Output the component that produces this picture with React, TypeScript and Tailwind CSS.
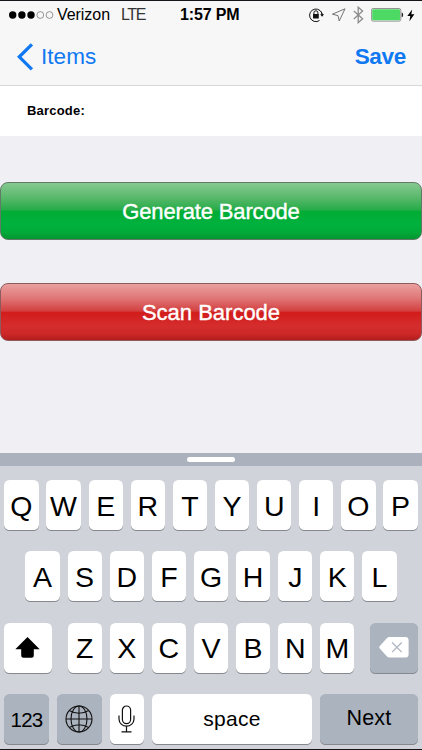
import type { ReactNode } from 'react';

const rowOne = ['Q', 'W', 'E', 'R', 'T', 'Y', 'U', 'I', 'O', 'P'];
const rowTwo = ['A', 'S', 'D', 'F', 'G', 'H', 'J', 'K', 'L'];
const rowThree = ['Z', 'X', 'C', 'V', 'B', 'N', 'M'];

type KeyProps = {
    children: ReactNode;
    className?: string;
    dark?: boolean;
}

function Key({ children, className = 'w-[34.2px] text-[28.5px] pt-px', dark }: KeyProps) {
    return (
        <button className={`h-[50px] shrink-0 rounded-[5.5px] flex items-center justify-center shadow-[0_1px_0.5px_#85888d] ${dark ? 'bg-[#abb3bf]' : 'bg-white'} ${className}`}>
            {children}
        </button>
    );
}

function StatusBar() {
    return (
        <div className="h-7 flex items-center relative">
            <svg className="ml-[9px]" width="45" height="8" viewBox="0 0 45 8">
                <circle cx="3.7" cy="4" r="3.7" />
                <circle cx="12.9" cy="4" r="3.7" />
                <circle cx="22" cy="4" r="3.7" />
                <circle cx="31.3" cy="4" r="3.4" fill="none" stroke="#555" strokeWidth="0.6" />
                <circle cx="40.5" cy="4" r="3.4" fill="none" stroke="#555" strokeWidth="0.6" />
            </svg>
            <span className="ml-[3px] text-[16px] tracking-[-0.05px]">Verizon</span>
            <span className="ml-[11px] text-[16px] tracking-[-1.4px] text-[#333]">LTE</span>
            <span className="absolute left-[180px] text-[16px] font-bold tracking-[-0.15px] whitespace-nowrap">1:57 PM</span>

            <div className="absolute left-[308px] flex items-center">
                {/* Rotation lock */}
                <svg width="16" height="16" viewBox="0 0 16 16" fill="none" stroke="#111">
                    <path d="M14.2 8.6A6.3 6.3 0 1 0 11.5 13.5M14.2 8.2A6.3 6.3 0 0 0 13 4.6" strokeWidth="1" />
                    <path d="M12.2 7.3h3.8l-1.9 2.5z" fill="#111" stroke="none" />
                    <path d="M5.9 7.5V5.8a2 2 0 0 1 4 0v1.7" strokeWidth="1" />
                    <rect x="5" y="7" width="5.8" height="4.4" rx="0.5" fill="#111" stroke="none" />
                </svg>
                {/* Location */}
                <svg className="ml-[7px]" width="15" height="14" viewBox="0 0 15 14" fill="none" stroke="#666" strokeWidth="0.9">
                    <path d="M14 0.8L1.4 6.2L7 7.6L8.2 13Z" />
                </svg>
                {/* Bluetooth */}
                <svg className="ml-[7px]" width="11" height="18" viewBox="0 0 11 18" fill="none" stroke="#8c8c8c" strokeWidth="1.3">
                    <path d="M0.8 4.9L9.6 12.7L5.2 16.7V1.2L9.6 5.1L0.8 13" />
                </svg>
                {/* Battery */}
                <svg className="ml-[7px]" width="33" height="14" viewBox="0 0 33 14">
                    <rect x="0.4" y="0.5" width="29.4" height="12.6" rx="1.8" fill="#fff" stroke="#777" strokeWidth="0.8" />
                    <rect x="1.2" y="1.3" width="27.8" height="11" rx="1" fill="#4cd964" />
                    <path d="M30.7 4.5c1.9 0.3 1.9 4.5 0 4.8z" fill="#222" />
                </svg>
                <svg className="ml-[3px]" width="8" height="13" viewBox="0 0 8 13">
                    <path d="M5.2 0.5L0.3 7.1H3.3L2.4 12.2L7.4 5.3H4.3Z" />
                </svg>
            </div>
        </div>
    );
}

export default function App() {
    return (
        <div className="h-[750px] w-[422px] overflow-hidden flex flex-col bg-[#efeff4] border-y border-[#171419] font-['Liberation_Sans',Arial,sans-serif] text-black leading-none">
            {/* Header */}
            <header className="h-[85px] shrink-0 bg-[#f7f7f7] border-b border-[#d8d8da]">
                <StatusBar />
                <nav className="h-14 flex items-center justify-between pl-[17px] pr-4 text-[#1079f2]">
                    <button className="flex items-center">
                        <svg width="17" height="28" viewBox="0 0 17 28" fill="none" stroke="currentColor" strokeWidth="3.3">
                            <path d="M14.9 1.3L2.3 13.8L14.9 26.3" />
                        </svg>
                        <span className="ml-[7px] text-[22.5px] tracking-[0.05px]">Items</span>
                    </button>
                    <button className="text-[22.5px] font-bold tracking-[-0.3px]">Save</button>
                </nav>
            </header>

            <div className="h-[50px] shrink-0 bg-white flex items-center pl-[27px] pb-0.5">
                <span className="text-[13px] font-bold tracking-[0.2px]">Barcode:</span>
            </div>

            {/* Actions */}
            <main className="h-[317px] shrink-0 pt-[46px] flex flex-col gap-[43.4px]">
                <button className="h-[58px] shrink-0 rounded-[8px] border border-[#607a65] bg-[linear-gradient(#86c890_0%,#5bb96d_25%,#26ac48_48%,#00ad35_51%,#00b13e_75%,#00aa39_88%,#079531_100%)] text-white text-[22px] tracking-[-0.15px] pt-px [-webkit-text-stroke:0.4px_white]">
                    Generate Barcode
                </button>
                <button className="h-[58px] shrink-0 rounded-[8px] border border-[#8d5b5b] bg-[linear-gradient(#eaa0a0_0%,#df7777_25%,#d44040_48%,#d21c1b_51%,#d52d2d_75%,#cf2828_88%,#b31d1d_100%)] text-white text-[22px] pt-0.5 [-webkit-text-stroke:0.4px_white]">
                    Scan Barcode
                </button>
            </main>

            {/* Keyboard */}
            <section className="flex-1 bg-[#d0d4da]">
                <div className="h-[13px] bg-[#abb2be] flex items-center justify-center">
                    <div className="h-[5px] w-12 rounded-full bg-white" />
                </div>
                <div className="pt-[14.4px] flex flex-col gap-[21.1px]">
                    <div className="flex justify-center gap-[7.95px]">
                        {rowOne.map((letter) => <Key key={letter}>{letter}</Key>)}
                    </div>
                    <div className="flex justify-center gap-[7.95px]">
                        {rowTwo.map((letter) => <Key key={letter}>{letter}</Key>)}
                    </div>
                    <div className="flex justify-between px-[4.2px]">
                        <Key className="w-[47.4px]">
                            <svg width="25" height="21" viewBox="0 0 25 21">
                                <path d="M12.5 0L24.7 12.3H18.8V18.2Q18.8 20.7 16.3 20.7H8.7Q6.2 20.7 6.2 18.2V12.3H0.3Z" />
                            </svg>
                        </Key>
                        <div className="flex gap-[7.95px]">
                            {rowThree.map((letter) => <Key key={letter}>{letter}</Key>)}
                        </div>
                        <Key dark className="w-[47.4px]">
                            <svg width="30" height="21" viewBox="0 0 30 21">
                                <path d="M10.5 0H26.2Q29.6 0 29.6 3.4V17.2Q29.6 20.6 26.2 20.6H10.5Q8.9 20.6 7.8 19.3L0.8 11.6Q-0.3 10.3 0.8 9L7.8 1.3Q8.9 0 10.5 0Z" fill="#fff" />
                                <path d="M13.1 5.5L22.7 15.2M22.7 5.5L13.1 15.2" stroke="#abb3bf" strokeWidth="1.2" />
                            </svg>
                        </Key>
                    </div>
                    <div className="flex px-[4.2px] gap-[8px]">
                        <Key dark className="w-[44.7px] text-[20.5px] tracking-[-0.7px] pt-[3px]">123</Key>
                        <Key dark className="w-[44.7px]">
                            <svg width="28" height="28" viewBox="0 0 28 28" fill="none" stroke="#111" strokeWidth="1.1">
                                <circle cx="14" cy="14" r="13" />
                                <ellipse cx="14" cy="14" rx="8" ry="13" />
                                <path d="M14 1V27M1 14H27M4.2 5.5Q14 11 23.8 5.5M4.2 22.5Q14 17 23.8 22.5" />
                            </svg>
                        </Key>
                        <Key className="w-[34.2px]">
                            <svg width="17" height="28" viewBox="0 0 17 28" fill="none" stroke="#111" strokeWidth="1.2">
                                <rect x="4.4" y="1" width="8.2" height="17.7" rx="4.1" />
                                <path d="M1 10.5V14a7.5 7.2 0 0 0 15 0V10.5M8.5 21.2V26.6M3.5 26.8H13.5" />
                            </svg>
                        </Key>
                        <Key className="w-[160.5px] text-[21px] tracking-[0.3px]">space</Key>
                        <Key dark className="w-[97.3px] text-[21.5px] tracking-[0.1px]">Next</Key>
                    </div>
                </div>
            </section>
        </div>
    );
}
